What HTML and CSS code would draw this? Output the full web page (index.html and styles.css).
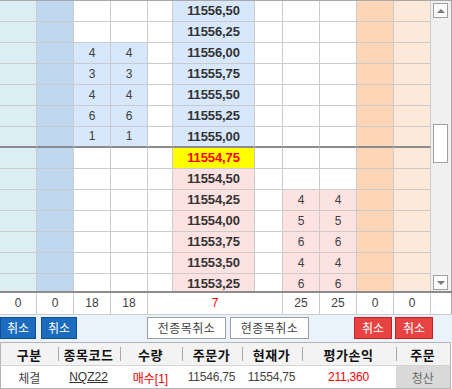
FILE: index.html
```html
<!DOCTYPE html>
<html lang="ko">
<head>
    <meta charset="UTF-8">
    <title>호가주문</title>
    <link rel="stylesheet" href="styles.css">
</head>
<body>
    <div class="book">
        <div class="ladder">
            <div class="rows" id="rows"></div>
            <div class="scroll">
                <div class="sbtn"><span class="arrow up"></span></div>
                <div class="thumb"></div>
                <div class="sbtn down-btn"><span class="arrow down"></span></div>
            </div>
        </div>

        <div class="totals">
            <div class="tcell">0</div>
            <div class="tcell">0</div>
            <div class="tcell">18</div>
            <div class="tcell">18</div>
            <div class="tcell mid red">7</div>
            <div class="tcell">25</div>
            <div class="tcell">25</div>
            <div class="tcell">0</div>
            <div class="tcell">0</div>
            <div class="tcell last"></div>
        </div>

        <div class="actions">
            <button class="btn blue">취소</button>
            <button class="btn blue">취소</button>
            <button class="btn plain first-plain">전종목취소</button>
            <button class="btn plain">현종목취소</button>
            <button class="btn red-btn first-red">취소</button>
            <button class="btn red-btn">취소</button>
        </div>

        <table class="orders">
            <tr>
                <th class="w1">구분</th>
                <th class="w2">종목코드</th>
                <th class="w3">수량</th>
                <th class="w4">주문가</th>
                <th class="w5">현재가</th>
                <th class="w6">평가손익</th>
                <th class="w7">주문</th>
            </tr>
            <tr>
                <td>체결</td>
                <td><span class="code">NQZ22</span></td>
                <td class="red">매수[1]</td>
                <td class="num">11546,75</td>
                <td class="num">11554,75</td>
                <td class="num red">211,360</td>
                <td class="settle">청산</td>
            </tr>
        </table>
    </div>

    <script>
        // price ladder: top half = sell side qty (blue), bottom half = buy side qty (pink)
        let ladder = [
            ["11556,50", "", "", "top"],
            ["11556,25", "", "", "top"],
            ["11556,00", "4", "4", "top"],
            ["11555,75", "3", "3", "top"],
            ["11555,50", "4", "4", "top"],
            ["11555,25", "6", "6", "top"],
            ["11555,00", "1", "1", "top sep"],
            ["11554,75", "", "", "now"],
            ["11554,50", "", "", "bottom"],
            ["11554,25", "4", "4", "bottom"],
            ["11554,00", "5", "5", "bottom"],
            ["11553,75", "6", "6", "bottom"],
            ["11553,50", "4", "4", "bottom"],
            ["11553,25", "6", "6", "bottom"]
        ];

        let rowsEl = document.getElementById("rows");

        ladder.forEach(item => {
            let price = item[0], q1 = item[1], q2 = item[2], kind = item[3];
            let top = kind.indexOf("top") >= 0;
            let row = document.createElement("div");
            row.className = "row" + (kind.indexOf("sep") >= 0 ? " sep" : "");

            let cells = [
                ["c-cyan", ""],
                ["c-blue", ""],
                [top && q1 ? "c-qb" : "", top ? q1 : ""],
                [top && q2 ? "c-qb" : "", top ? q2 : ""],
                ["", ""],
                ["price " + (kind == "now" ? "c-now" : top ? "c-qb" : "c-pink"), price],
                ["", ""],
                [!top && q1 ? "c-pink" : "", !top ? q1 : ""],
                [!top && q2 ? "c-pink" : "", !top ? q2 : ""],
                ["c-orange", ""],
                ["c-peach", ""]
            ];

            cells.forEach(c => {
                let cell = document.createElement("div");
                cell.className = "cell " + c[0];
                cell.textContent = c[1];
                row.appendChild(cell);
            });

            rowsEl.appendChild(row);
        });
    </script>
</body>
</html>
```

FILE: styles.css
```css
* {
    box-sizing: border-box;
}
body {
    margin: 0;
    background: #ffffff;
    font-family: "Liberation Sans", "Noto Sans CJK KR", sans-serif;
    color: #3a3a3a;
}
.book {
    width: 452px;
    height: 389px;
    overflow: hidden;
}

/* ladder */
.ladder {
    display: flex;
    height: 293px;
    border-top: 1px solid #a8a8a8;
    border-bottom: 2px solid #8c8c8c;
}
.rows {
    width: 431px;
    height: 290px;
    overflow: hidden;
}
.row {
    display: grid;
    grid-template-columns: 37px 37px 37px 37px 25px 82px 28px 37px 37px 37px 37px;
    height: 21px;
}
.cell {
    border-right: 1px solid #cbcbcb;
    border-bottom: 1px solid #cbcbcb;
    text-align: center;
    font-size: 12px;
    line-height: 20px;
    color: #404040;
}
.row.sep .cell {
    border-bottom: 2px solid #8c8c8c;
    line-height: 19px;
}
.price {
    font-weight: bold;
    font-size: 13px;
    letter-spacing: -0.1px;
    color: #333;
}
.c-cyan { background: #dbeef4; }
.c-blue { background: #bfd8ef; }
.c-qb { background: #d7e8fc; }
.c-pink { background: #fde2e2; }
.c-now { background: #ffff00; color: #ff0000; }
.c-orange { background: #fcd6b6; }
.c-peach { background: #fde9da; }

/* scrollbar */
.scroll {
    width: 21px;
    height: 290px;
    background: #f0f0f0;
    border-right: 1px solid #a9a9a9;
    padding: 2px 2px 1px 2px;
    display: flex;
    flex-direction: column;
}
.sbtn {
    width: 15px;
    height: 15px;
    border: 1px solid #a0a0a0;
    background: #fbfbfb;
    display: flex;
    align-items: center;
    justify-content: center;
}
.down-btn {
    margin-top: auto;
}
.arrow {
    width: 0;
    height: 0;
    border-left: 4px solid transparent;
    border-right: 4px solid transparent;
}
.arrow.up {
    border-bottom: 4px solid #7a7a7a;
}
.arrow.down {
    border-top: 4px solid #7a7a7a;
}
.thumb {
    width: 15px;
    height: 39px;
    margin-top: 106px;
    background: #ffffff;
    border: 1px solid #a0a0a0;
}

/* totals */
.totals {
    display: grid;
    grid-template-columns: 37px 37px 37px 37px 135px 37px 37px 37px 37px 21px;
    height: 22px;
    border-bottom: 1px solid #cbcbcb;
}
.tcell {
    border-right: 1px solid #cbcbcb;
    text-align: center;
    font-size: 12px;
    line-height: 21px;
    color: #404040;
}
.tcell.last {
    border-right: 1px solid #a9a9a9;
}
.red {
    color: #ff0000 !important;
}

/* action buttons */
.actions {
    display: flex;
    height: 27px;
    padding-top: 2px;
    background: #eaf3fc;
}
.btn {
    height: 22px;
    padding: 0;
    font-family: "Noto Sans CJK KR", sans-serif;
    font-size: 12px;
    line-height: 20px;
    cursor: pointer;
    border-radius: 0;
}
.blue {
    width: 36px;
    margin-right: 5px;
    background: #1b6cbe;
    border: 1px solid #0e4f96;
    color: #ffffff;
}
.plain {
    width: 79px;
    margin-right: 4px;
    background: #ffffff;
    border: 1px solid #9e9e9e;
    color: #454545;
    letter-spacing: 0.5px;
}
.first-plain {
    margin-left: 65px;
}
.red-btn {
    width: 38px;
    margin-right: 3px;
    background: #e84242;
    border: 1px solid #c42222;
    color: #ffffff;
}
.first-red {
    margin-left: 41px;
}

/* orders table */
.orders {
    width: 450px;
    border-collapse: collapse;
    border: 1px solid #b4b4b4;
    table-layout: fixed;
    font-size: 12px;
}
.orders th {
    position: relative;
    height: 23px;
    padding: 0;
    background: #f3f3f3;
    color: #111;
    font-family: "Noto Sans CJK KR", sans-serif;
    font-size: 13px;
    font-weight: bold;
    letter-spacing: 0.5px;
    border-bottom: 1px solid #d4d4d4;
}
.orders th + th::before {
    content: "";
    position: absolute;
    left: 0;
    top: 4px;
    bottom: 4px;
    border-left: 1px solid #a8a8a8;
}
.orders td {
    height: 23px;
    padding: 0;
    text-align: center;
    color: #444;
    font-family: "Liberation Sans", "Noto Sans CJK KR", sans-serif;
    font-size: 12px;
}
.w1 { width: 57px; }
.w2 { width: 62px; }
.w3 { width: 62px; }
.w4 { width: 60px; }
.w5 { width: 60px; }
.w6 { width: 94px; }
.w7 { width: 55px; }
.code {
    text-decoration: underline;
    color: #333;
}
.num {
    letter-spacing: -0.2px;
}
.settle {
    background: #d9d9d9;
    color: #6a6a6a !important;
}
```
